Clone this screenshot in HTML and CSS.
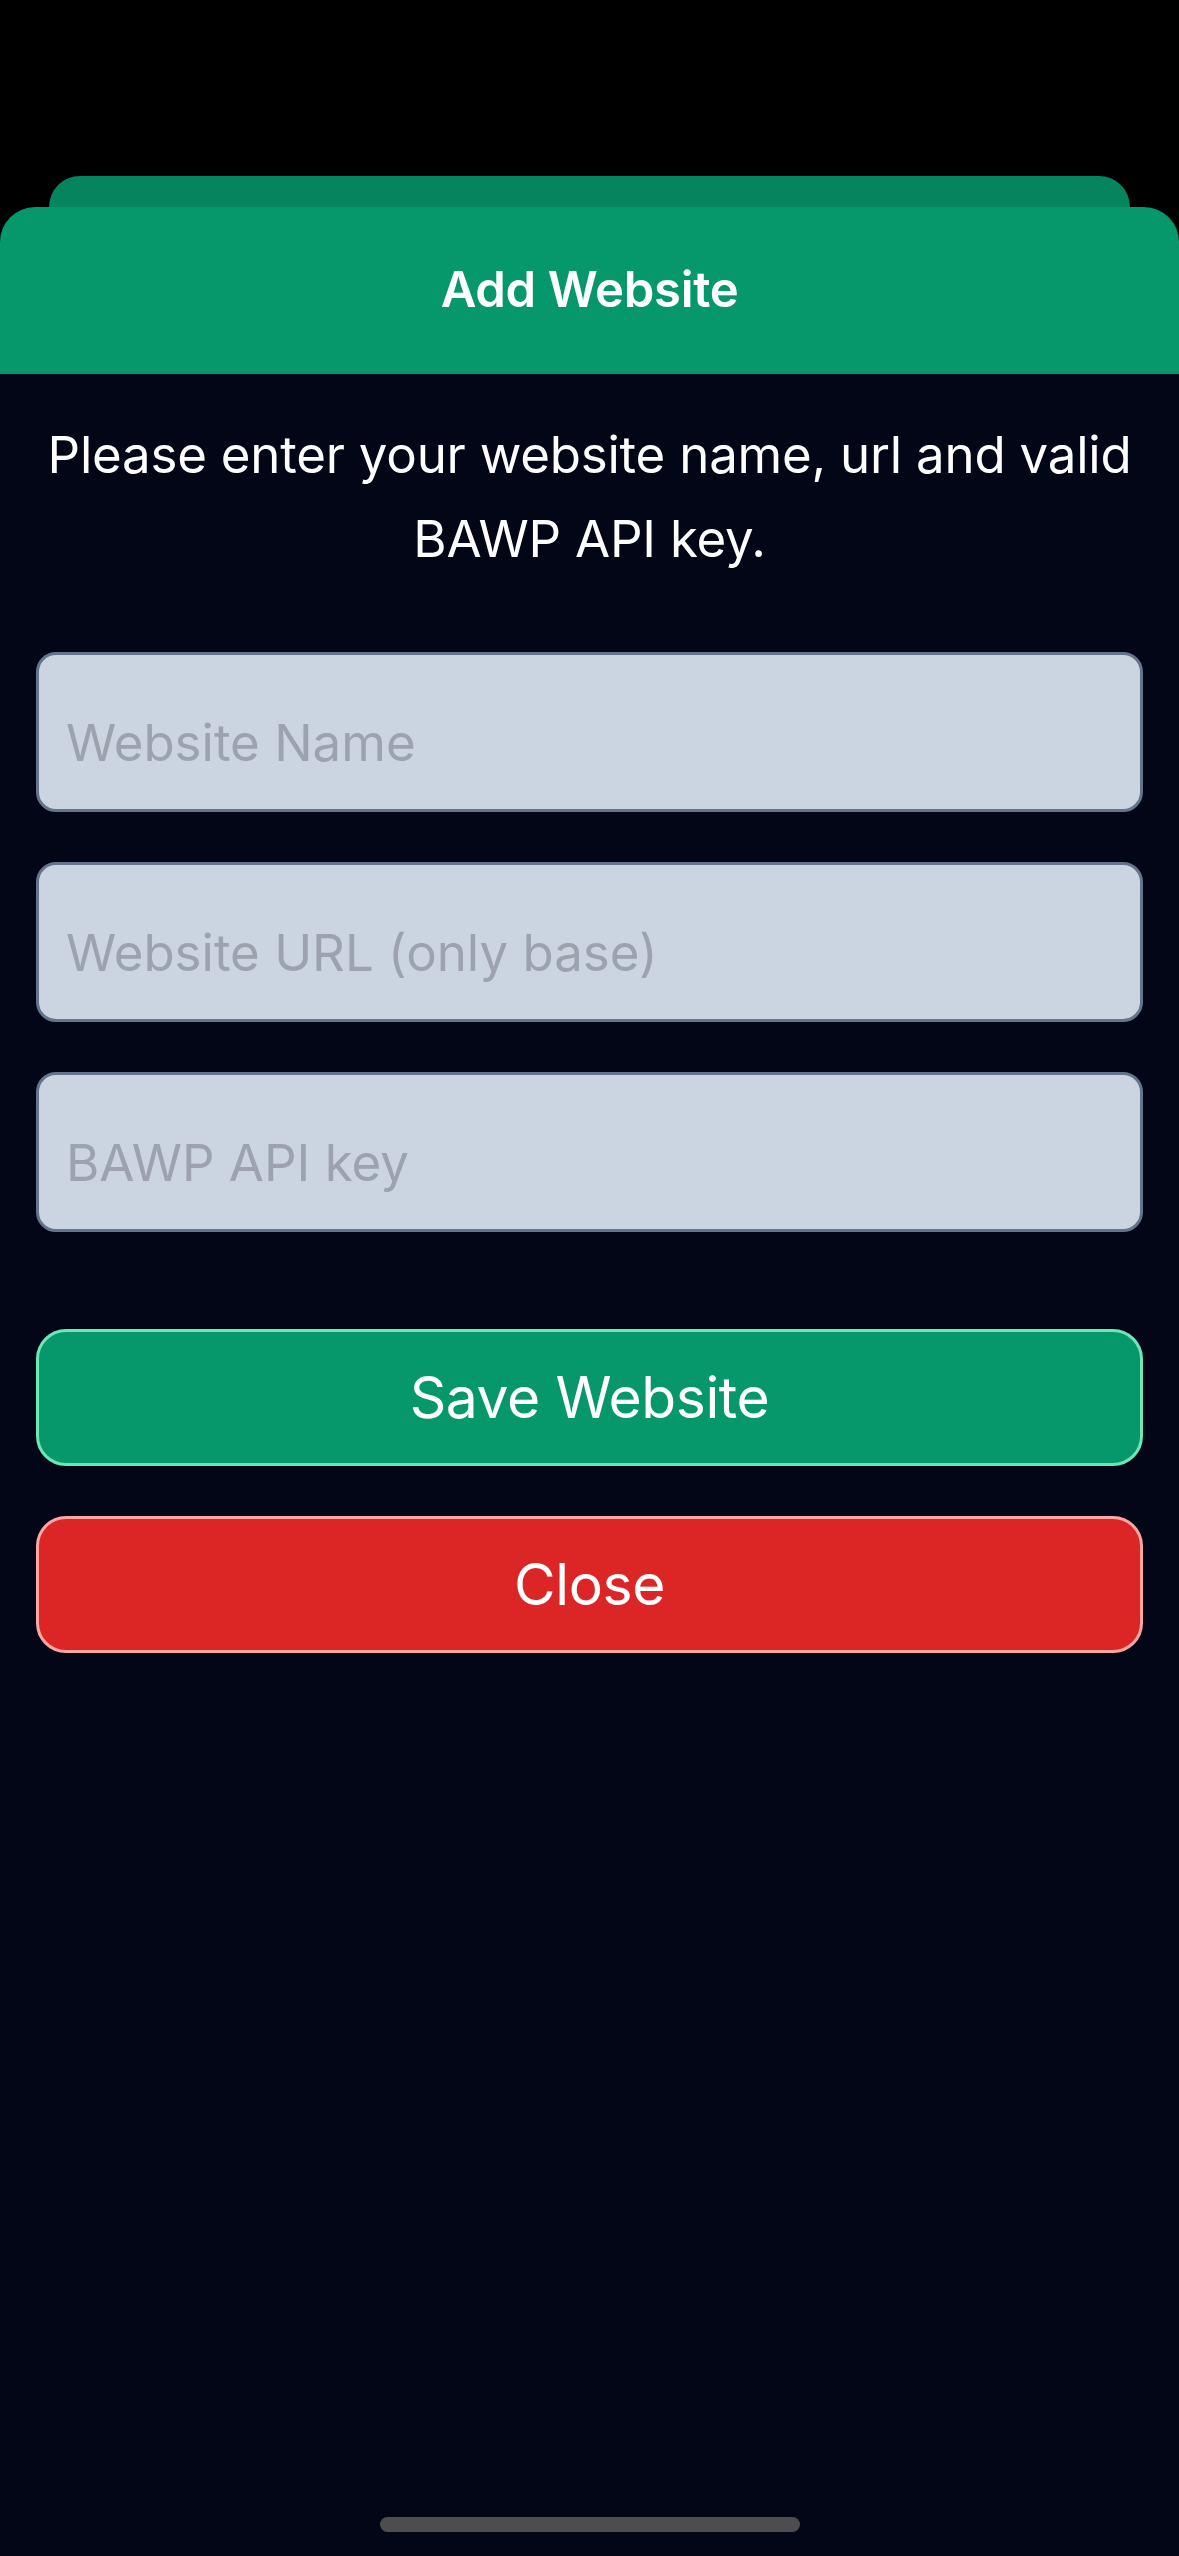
FILE: index.html
```html
<!DOCTYPE html>
<html lang="en">
<head>
<meta charset="utf-8">
<title>Add Website</title>
<link rel="stylesheet" href="styles.css">
</head>
<body>
<div class="screen">
  <div class="backdrop">
    <div class="back-card"></div>
  </div>
  <div class="sheet">
    <header class="sheet-header">
      <h1 class="sheet-title">Add Website</h1>
    </header>
    <main class="sheet-body">
      <p class="intro">Please enter your website name, url and valid<br>BAWP API key.</p>
      <form class="form">
        <input class="field" type="text" placeholder="Website Name">
        <input class="field" type="text" placeholder="Website URL (only base)">
        <input class="field" type="text" placeholder="BAWP API key">
        <div class="actions">
          <button type="button" class="btn btn-save">Save Website</button>
          <button type="button" class="btn btn-close">Close</button>
        </div>
      </form>
    </main>
    <div class="home-bar"><span class="home-indicator"></span></div>
  </div>
</div>
</body>
</html>
```

FILE: styles.css
```css
* { box-sizing: border-box; }
html, body {
  margin: 0;
  padding: 0;
  background: #020617;
}
body {
  font-family: Inter, "Liberation Sans", Arial, sans-serif;
  color: #ffffff;
}
.screen {
  width: 1179px;
  min-height: 2556px;
  background: #000000;
  display: flex;
  flex-direction: column;
}
.backdrop {
  padding: 176px 49px 0 49px;
}
.back-card {
  height: 31px;
  background: #05845e;
  border-radius: 33px 33px 0 0;
}
.sheet {
  flex: 1;
  display: flex;
  flex-direction: column;
  background: #020617;
  border-radius: 35px 35px 0 0;
  overflow: hidden;
}
.sheet-header {
  height: 167px;
  background: #06976b;
  display: flex;
  align-items: center;
  justify-content: center;
}
.sheet-title {
  margin: 0;
  font-size: 49px;
  font-weight: 600;
  letter-spacing: -0.3px;
  line-height: 1;
  padding-bottom: 3px;
}
.sheet-body {
  flex: 1;
  padding: 0 30px;
}
.intro {
  margin: 39px 0 0 0;
  font-size: 51px;
  line-height: 84px;
  text-align: center;
  letter-spacing: -0.22px;
  white-space: nowrap;
}
.form {
  margin-top: 71px;
  padding: 0 6px;
  display: flex;
  flex-direction: column;
  gap: 50px;
}
.field {
  display: block;
  width: 100%;
  height: 160px;
  margin: 0;
  padding: 20px 27px 0 27px;
  background: #cbd5e1;
  border: 3px solid #64748b;
  border-radius: 20px;
  font-family: inherit;
  font-size: 51px;
  color: #111827;
  outline: none;
}
.field::placeholder {
  color: #9ca3af;
  opacity: 1;
}
.actions {
  margin-top: 47px;
  display: flex;
  flex-direction: column;
  gap: 50px;
}
.btn {
  display: block;
  width: 100%;
  height: 137px;
  margin: 0;
  border-radius: 30px;
  border: 3px solid;
  font-family: inherit;
  font-size: 57px;
  font-weight: 400;
  color: #ffffff;
  letter-spacing: -0.4px;
  cursor: pointer;
}
.btn-save {
  background: #06976b;
  border-color: #6ee7b7;
}
.btn-close {
  background: #dc2626;
  border-color: #fca5a5;
}
.home-bar {
  display: flex;
  justify-content: center;
  padding-bottom: 24px;
}
.home-indicator {
  display: block;
  width: 420px;
  height: 15px;
  border-radius: 8px;
  background: #4d4d4d;
}
```
